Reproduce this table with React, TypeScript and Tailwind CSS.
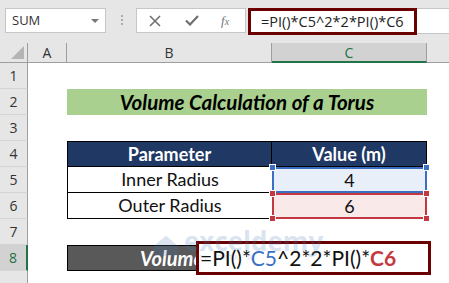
import React from "react";

const ROWS = [1, 2, 3, 4, 5, 6, 7, 8, 9];

function Handle({ className }: { className: string }) {
  return (
    <span
      className={`absolute size-[7px] border border-white ${className}`}
    />
  );
}

function RowHead({ n, active }: { n: number; active?: boolean }) {
  return (
    <div
      className={`flex w-[28px] shrink-0 items-center justify-center border-b border-[#d4d4d4] text-[14px] text-[#333] ${
        active
          ? "border-r-2 border-r-[#217346] bg-[#d2d2d2] text-[#217346]"
          : "border-r border-r-[#9e9e9e] bg-[#e6e6e6]"
      }`}
      style={{ fontFamily: "'Open Sans', sans-serif" }}
    >
      {n < 9 ? n : ""}
    </div>
  );
}

function Row({
  n,
  active,
  children,
}: {
  n: number;
  active?: boolean;
  children?: React.ReactNode;
}) {
  return (
    <div className="relative flex h-[26px]">
      <RowHead n={n} active={active} />
      <div className="w-[39px] shrink-0" />
      {children}
    </div>
  );
}

export default function App() {
  const cellFont = { fontFamily: "Lato, 'Open Sans', sans-serif" };
  return (
    <div
      className="relative h-[283px] w-[449px] overflow-hidden bg-white"
      style={{ fontFamily: "'Open Sans', 'Noto Sans', sans-serif" }}
    >
      {/* formula bar */}
      <div className="flex h-[43px] items-start bg-[#e6e6e6] pt-[8px]">
        <div className="ml-[5px] flex h-[25px] w-[101px] items-center justify-between border border-[#c6c6c6] bg-white pl-[6px] pr-[6px]">
          <span className="text-[13px] text-[#333]">SUM</span>
          <span className="h-0 w-0 border-x-[4px] border-t-[4px] border-x-transparent border-t-[#777]" />
        </div>
        <div className="ml-[15px] mt-[7px] flex flex-col gap-[2px]">
          <span className="size-[2px] bg-[#aaa]" />
          <span className="size-[2px] bg-[#aaa]" />
          <span className="size-[2px] bg-[#aaa]" />
        </div>
        <div className="ml-[13px] flex h-[25px] w-[110px] items-center border border-[#c6c6c6] bg-white text-[#777]">
          <svg className="ml-[12px]" width="12" height="12" viewBox="0 0 12 12">
            <path d="M1 1 L11 11 M11 1 L1 11" stroke="#707070" strokeWidth="1.6" />
          </svg>
          <svg className="ml-[24px]" width="14" height="11" viewBox="0 0 14 11">
            <path d="M1 5.5 L5 9.5 L13 1" stroke="#707070" strokeWidth="2.2" fill="none" />
          </svg>
          <span
            className="ml-[22px] text-[13px] italic text-[#777]"
            style={{ fontFamily: "'Liberation Serif', serif" }}
          >
            f<span className="text-[10px]">x</span>
          </span>
        </div>
        <div className="ml-[2px] flex h-[26px] flex-1 border-y border-[#c6c6c6] bg-white">
          <div className="flex h-[27px] w-[169px] -translate-y-[1px] items-center border-[3px] border-[#6b0000] pl-[10px]">
            <span className="text-[14.5px] text-[#222]">=PI()*C5^2*2*PI()*C6</span>
          </div>
        </div>
      </div>

      {/* column headers */}
      <div className="flex h-[20px] text-[14px] text-[#333]">
        <div className="relative w-[28px] shrink-0 border-b border-r border-[#9e9e9e] bg-[#e6e6e6]">
          <span className="absolute bottom-[3px] right-[3px] h-0 w-0 border-b-[13px] border-l-[13px] border-l-transparent border-b-[#b4b4b4]" />
        </div>
        <div className="flex w-[39px] shrink-0 items-center justify-center border-b border-r border-[#9e9e9e] bg-[#e6e6e6]">
          A
        </div>
        <div className="flex w-[205px] shrink-0 items-center justify-center border-b border-r border-[#9e9e9e] bg-[#e6e6e6]">
          B
        </div>
        <div className="flex w-[155px] shrink-0 items-center justify-center border-b-2 border-r border-b-[#217346] border-r-[#9e9e9e] bg-[#d2d2d2] text-[#217346]">
          C
        </div>
        <div className="flex-1 border-b border-[#9e9e9e] bg-[#e6e6e6]" />
      </div>

      {/* rows */}
      <div style={cellFont}>
        <Row n={ROWS[0]} />
        <Row n={ROWS[1]}>
          <div className="flex w-[360px] items-center justify-center bg-[#a9d08e] text-[20.5px] font-bold italic text-black">
            Volume Calculation of a Torus
          </div>
        </Row>
        <Row n={ROWS[2]} />
        <Row n={ROWS[3]}>
          <div className="flex w-[205px] items-center justify-center border border-black bg-[#203864] text-[18px] font-bold text-white">
            Parameter
          </div>
          <div className="flex w-[155px] items-center justify-center border border-l-0 border-black bg-[#203864] text-[18px] font-bold text-white">
            Value (m)
          </div>
        </Row>
        <Row n={ROWS[4]}>
          <div className="flex w-[205px] items-center justify-center border-b border-l border-black text-[18px] text-[#111]">
            Inner Radius
          </div>
          <div className="relative flex w-[155px] items-center justify-center border-2 border-[#3b6fc4] bg-[#e9eff9] text-[18px] text-[#111]">
            4
            <Handle className="-left-[5px] -top-[5px] bg-[#3b6fc4]" />
            <Handle className="-right-[5px] -top-[5px] bg-[#3b6fc4]" />
          </div>
        </Row>
        <Row n={ROWS[5]}>
          <div className="flex w-[205px] items-center justify-center border-b border-l border-black text-[18px] text-[#111]">
            Outer Radius
          </div>
          <div className="relative flex w-[155px] items-center justify-center border-2 border-[#c4393f] bg-[#f9e9e9] text-[18px] text-[#111]">
            6
            <Handle className="-left-[5px] -top-[5px] bg-[#c4393f]" />
            <Handle className="-right-[5px] -top-[5px] bg-[#c4393f]" />
            <Handle className="-bottom-[5px] -left-[5px] bg-[#c4393f]" />
            <Handle className="-bottom-[5px] -right-[5px] bg-[#c4393f]" />
          </div>
        </Row>
        <Row n={ROWS[6]} />
        <Row n={ROWS[7]} active>
          <div className="flex w-[360px] items-center border border-black bg-[#595959] pl-[72px] text-[20px] font-bold italic text-white">
            Volume
          </div>
          {/* in-cell editor */}
          <div className="absolute left-[196px] top-[-4px] flex h-[34px] w-[235px] items-center border-[3px] border-[#6b0000] bg-white pl-[1px] text-[21px] text-[#111]">
            =PI()*<span className="text-[#3b6fc4]">C5</span>^2*2*PI()*
            <span className="font-bold text-[#c4393f]">C6</span>
          </div>
        </Row>
        <Row n={ROWS[8]} />
      </div>

      {/* watermark */}
      <div className="pointer-events-none absolute left-[152px] top-[228px] flex items-center gap-[4px] opacity-20">
        <svg width="28" height="24" viewBox="0 0 30 26">
          <path d="M2 14 L15 3 L28 14 L28 25 L2 25 Z" fill="#4a78b8" />
        </svg>
        <div className="flex flex-col leading-none">
          <span className="text-[26px] font-bold text-[#4a78b8]">exceldemy</span>
          <span className="text-[7px] tracking-[1px] text-[#4a78b8]">EXCEL · DATA · BI</span>
        </div>
      </div>
    </div>
  );
}
